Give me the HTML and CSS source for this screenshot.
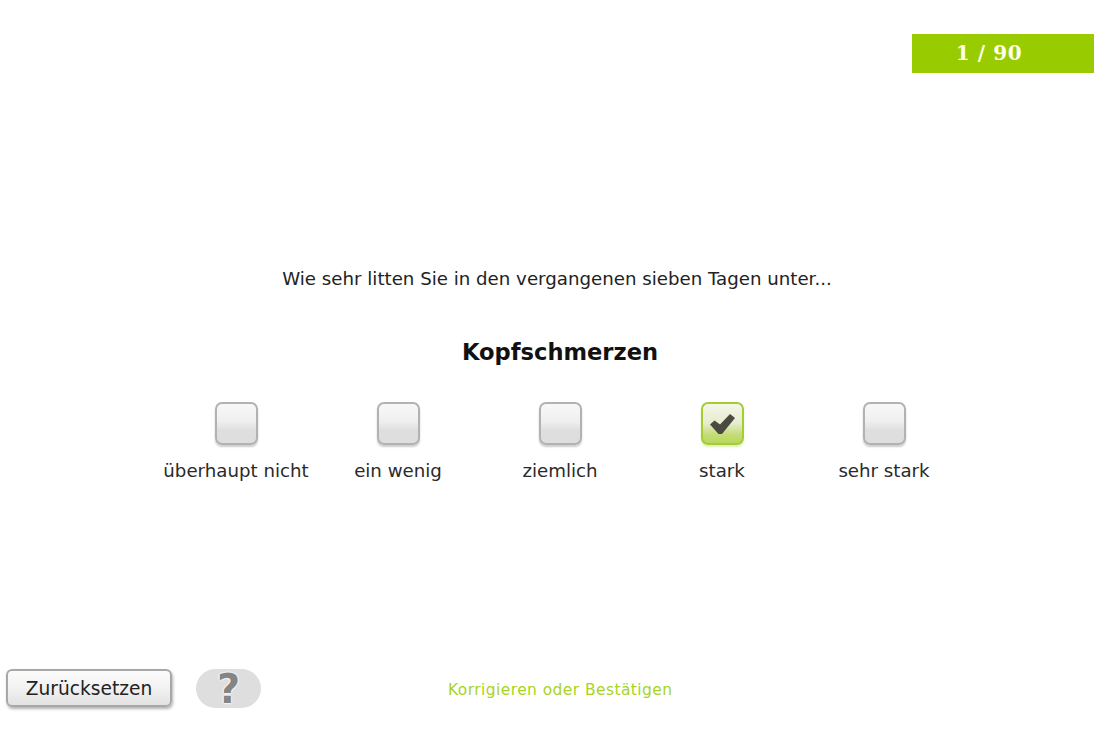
FILE: index.html
```html
<!DOCTYPE html>
<html lang="de">
<head>
<meta charset="utf-8">
<title>Fragebogen</title>
<link rel="stylesheet" href="styles.css">
</head>
<body>
<div class="page">
  <header class="top"><div class="counter">1 / 90</div></header>
  <main class="main">
    <p class="question">Wie sehr litten Sie in den vergangenen sieben Tagen unter...</p>
    <h1 class="symptom">Kopfschmerzen</h1>
    <div class="options">
      <div class="option"><span class="box"></span><span class="label">überhaupt nicht</span></div>
      <div class="option"><span class="box"></span><span class="label">ein wenig</span></div>
      <div class="option"><span class="box"></span><span class="label">ziemlich</span></div>
      <div class="option"><span class="box box-on"><svg class="check" viewBox="0 0 25 20" width="25" height="20"><path d="M0 10.5 L4.5 6.5 L10 10.5 L20 0 L25 4 L12 20 L8.5 20 Z" fill="#4a4a40"/></svg></span><span class="label">stark</span></div>
      <div class="option"><span class="box"></span><span class="label">sehr stark</span></div>
    </div>
  </main>
  <footer class="footer">
    <button class="reset" type="button">Zurücksetzen</button>
    <div class="help">?</div>
    <div class="status">Korrigieren oder Bestätigen</div>
  </footer>
</div>
</body>
</html>
```
FILE: styles.css
```css
html, body { margin: 0; padding: 0; background: #fff; }
body { font-family: "DejaVu Sans", Verdana, sans-serif; color: #222; }
.page { width: 1094px; height: 729px; overflow: hidden; display: flex; flex-direction: column; }
.top { display: flex; justify-content: flex-end; padding-top: 34px; }
.counter {
  width: 182px; height: 39px; padding-right: 28px; box-sizing: border-box;
  background: #99cc00; color: #fdfde8;
  font: bold 20px/39px "DejaVu Serif", serif; text-align: center;
  letter-spacing: 0.6px;
}
.main { display: flex; flex-direction: column; align-items: center; }
.question { margin: 194px 0 0; padding-left: 20px; text-align: center; font-size: 18.2px; line-height: 24px; white-space: nowrap; }
.symptom { margin: 46px 0 0; padding-left: 26px; font-size: 22.6px; line-height: 30px; font-weight: bold; color: #111; }
.options { display: grid; grid-template-columns: repeat(5, 162px); margin: 35px 0 0 26px; }
.option { display: flex; flex-direction: column; align-items: center; }
.box {
  width: 43px; height: 43px; box-sizing: border-box;
  display: flex; align-items: center; justify-content: center;
  border: 2px solid #b2b2b2; border-radius: 7px;
  background: linear-gradient(#f8f8f8 0%, #efefef 45%, #dedede 68%, #dedede 100%);
  box-shadow: 0 2px 2px rgba(0,0,0,.2);
}
.box-on {
  border-color: #a6cc33;
  background: linear-gradient(#f4f6e8 0%, #e6ecce 50%, #c4dc78 78%, #b8d85c 100%);
  box-shadow: 0 2px 2px rgba(153,204,0,.3);
}
.check { display: block; }
.label { margin-top: 14px; font-size: 18.2px; line-height: 24px; white-space: nowrap; color: #2a2a2a; }
.footer { margin-top: auto; margin-bottom: 21px; display: flex; align-items: flex-start; padding-left: 6px; }
.reset {
  width: 166px; height: 38px; padding: 0; box-sizing: border-box;
  border: 2px solid #a8a8a8; border-radius: 6px;
  background: linear-gradient(#fbfbfb 0%, #f2f2f2 50%, #e2e2e2 100%);
  box-shadow: 1px 2px 3px rgba(0,0,0,.3);
  font: 18.6px "DejaVu Sans", sans-serif; color: #222;
}
.help {
  width: 65px; height: 39px; margin-left: 24px; border-radius: 20px;
  background: #dedede; color: #858585;
  text-align: center; font: bold 40px/41px "DejaVu Sans", sans-serif;
  text-shadow: 0 0 2px #fff, 0 0 2px #fff, 0 0 2px #fff, 0 0 1px #fff;
}
.status { margin-left: 187px; height: 39px; font-size: 15.5px; line-height: 42px; letter-spacing: 0.42px; color: #a8d424; white-space: nowrap; }
```
